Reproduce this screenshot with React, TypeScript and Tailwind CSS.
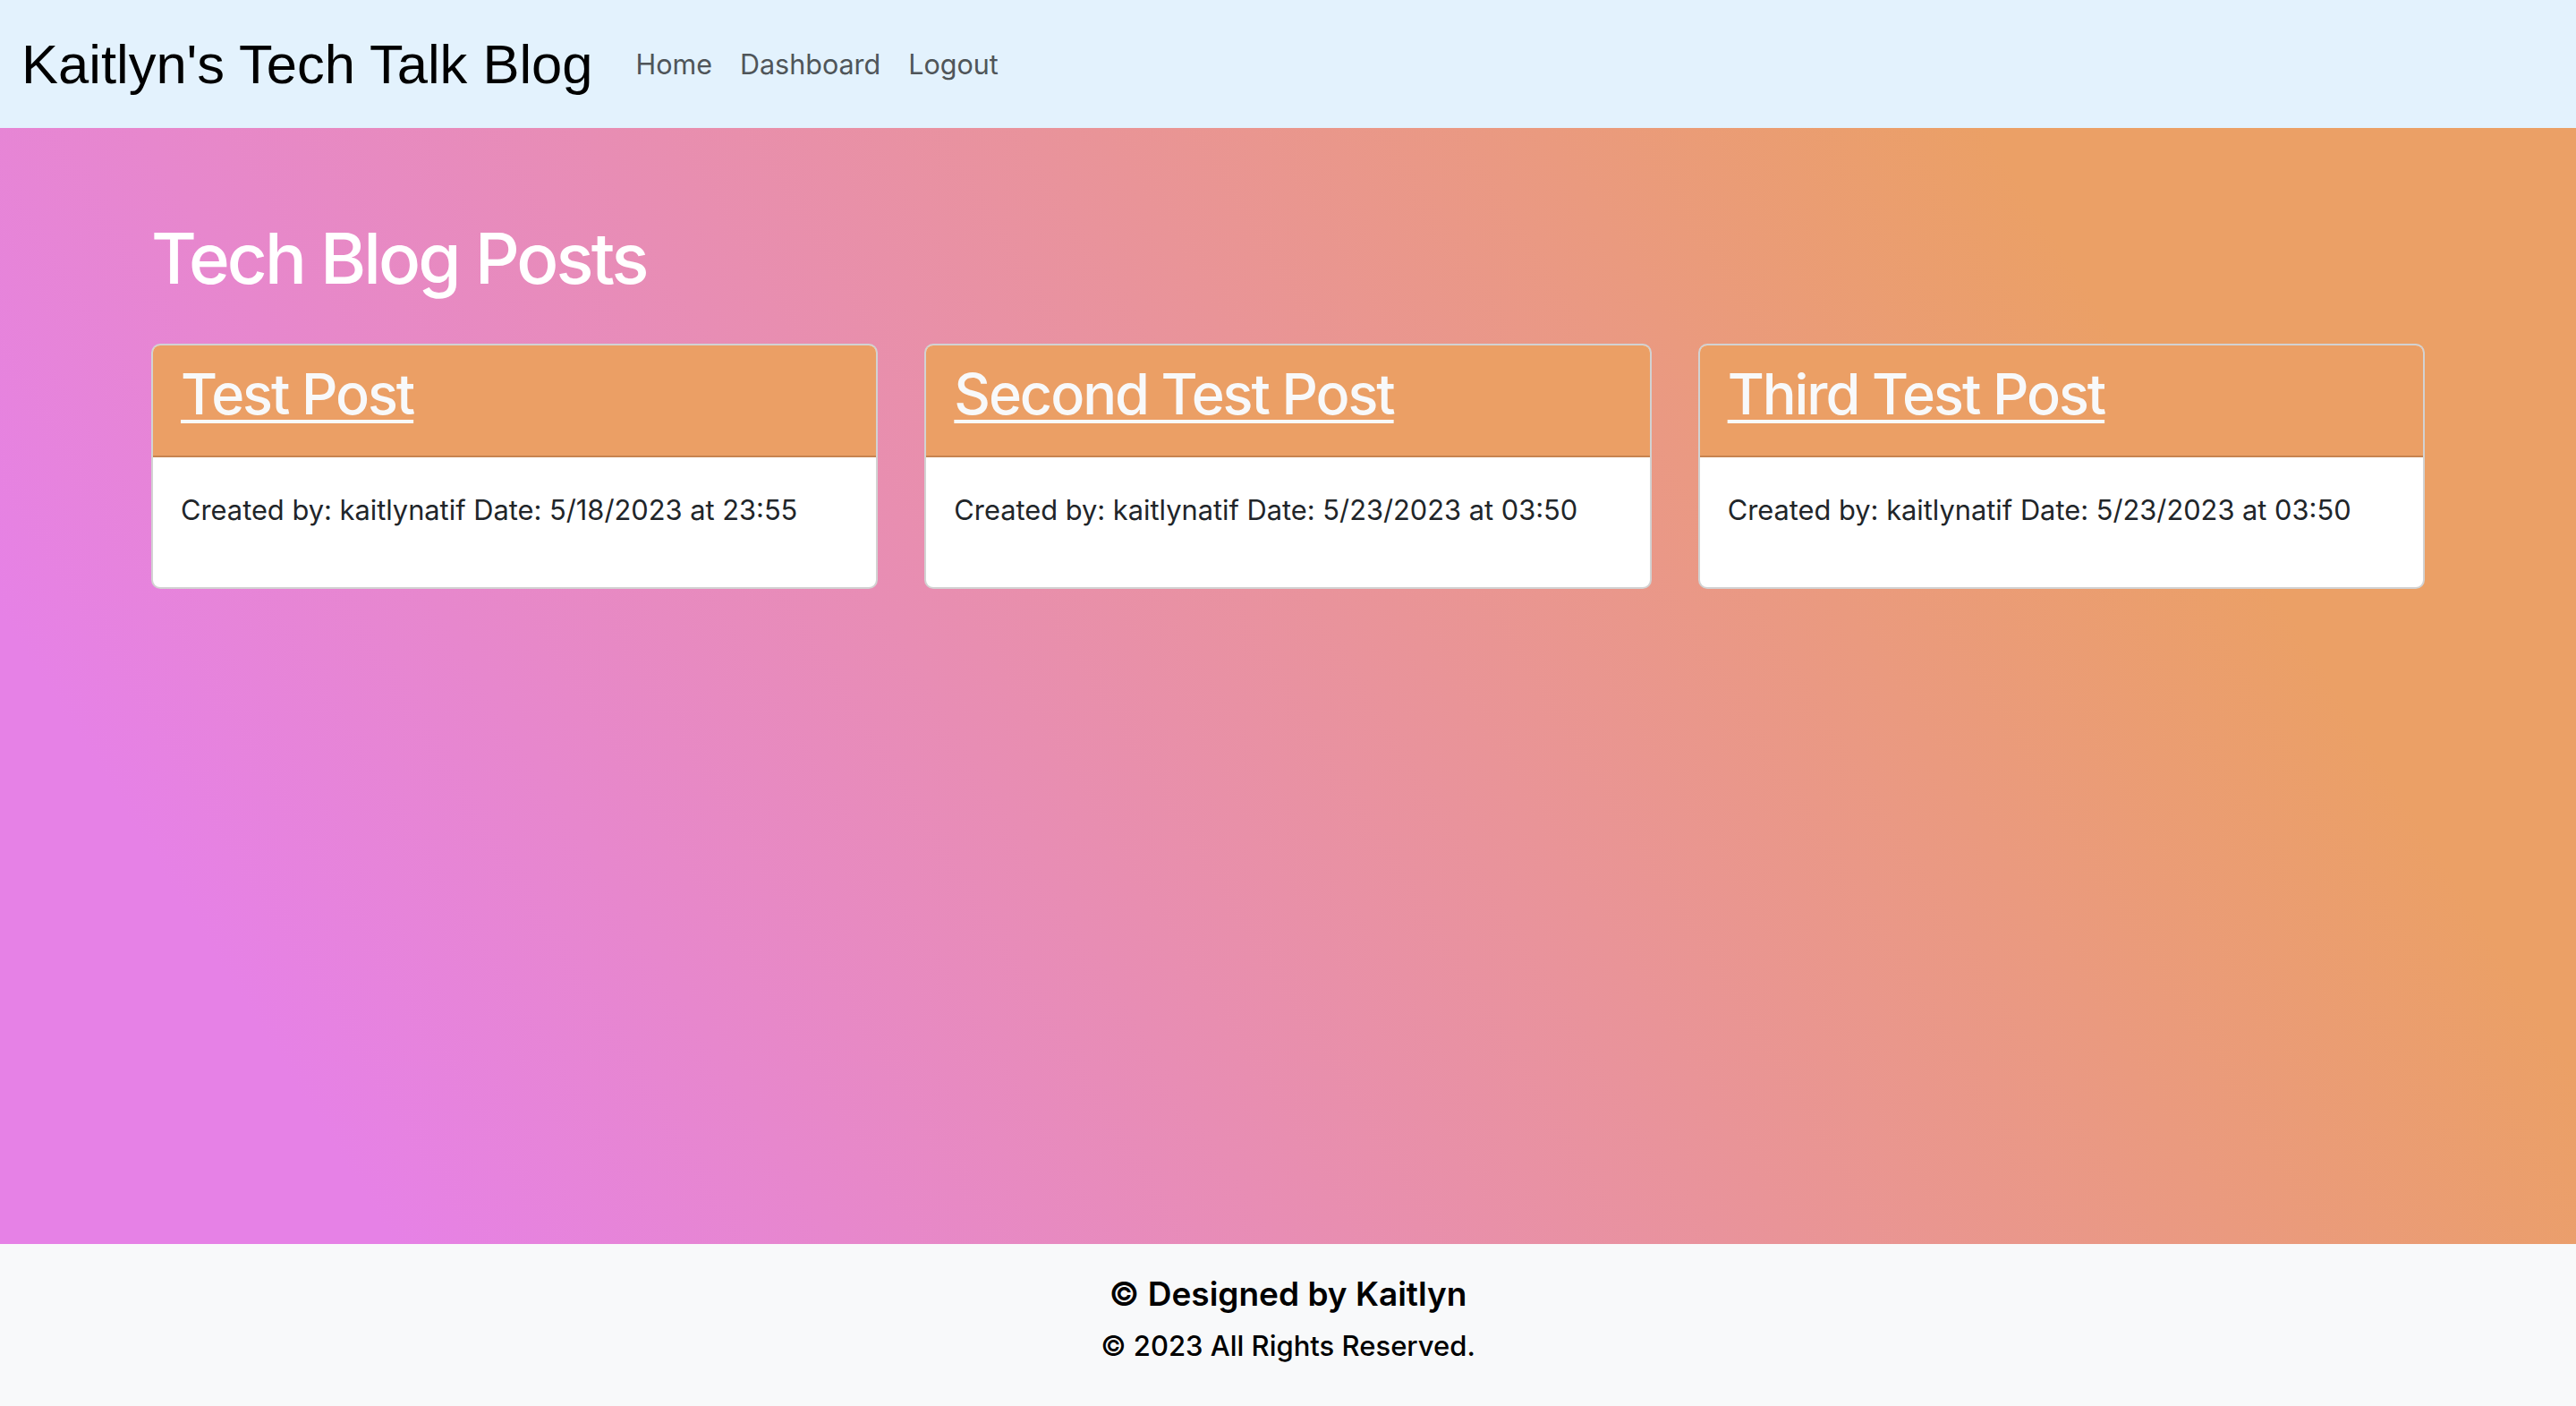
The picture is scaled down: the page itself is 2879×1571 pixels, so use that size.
const posts = [
  { title: 'Test Post', author: 'kaitlynatif', date: '5/18/2023 at 23:55' },
  { title: 'Second Test Post', author: 'kaitlynatif', date: '5/23/2023 at 03:50' },
  { title: 'Third Test Post', author: 'kaitlynatif', date: '5/23/2023 at 03:50' },
];

const NavLink = ({ children }: { children: React.ReactNode }) => (
  <a href="#" className="text-[30.5px] text-[#4f5559] leading-[1.5]">
    {children}
  </a>
);

const PostCard = ({ title, author, date }: { title: string; author: string; date: string }) => (
  <div className="bg-white border-2 border-[#d2d2d2] rounded-[10px] overflow-hidden">
    <div className="bg-[#eb9f65] border-b-2 border-[#c78450] px-[31px] pt-[17px] pb-[31px]">
      <h2 className="text-[63px] leading-[1.2] font-medium tracking-[-0.033em] text-[#f8f9fa]">
        <a href="#" className="underline decoration-[4px] underline-offset-[6px]">
          {title}
        </a>
      </h2>
    </div>
    <div className="px-[31px] pt-[36px] pb-[63px]">
      <p className="text-[30.8px] leading-[1.5] text-[#212529]">
        Created by: {author} Date: {date}
      </p>
    </div>
  </div>
);

export default function App() {
  return (
    <div className="h-screen flex flex-col font-['Inter',sans-serif]">
      <nav className="h-[143px] shrink-0 bg-[#e3f2fd] flex items-center pl-[24px]">
        <a href="#" className="font-['Liberation_Sans',Arial,sans-serif] text-[61.5px] text-black leading-none">
          Kaitlyn's Tech Talk Blog
        </a>
        <div className="flex items-center gap-[31px] ml-[48px]">
          <NavLink>Home</NavLink>
          <NavLink>Dashboard</NavLink>
          <NavLink>Logout</NavLink>
        </div>
      </nav>

      <main className="flex-1 bg-[linear-gradient(58deg,#e681e6_12%,#eba066_82%)] px-[169px] pt-[99px]">
        <h1 className="text-[78px] leading-[1.2] font-medium tracking-[-0.037em] text-white mb-[48px]">
          Tech Blog Posts
        </h1>
        <div className="grid grid-cols-3 gap-[52px]">
          {posts.map((p) => (
            <PostCard key={p.title} {...p} />
          ))}
        </div>
      </main>

      <footer className="h-[181px] shrink-0 bg-[#f8f9fa] flex flex-col items-center pt-[34px] gap-[13px] text-black">
        <h3 className="text-[37px] leading-[1.2] font-semibold">© Designed by Kaitlyn</h3>
        <p className="text-[31px] leading-[1.5] font-medium">© 2023 All Rights Reserved.</p>
      </footer>
    </div>
  );
}
